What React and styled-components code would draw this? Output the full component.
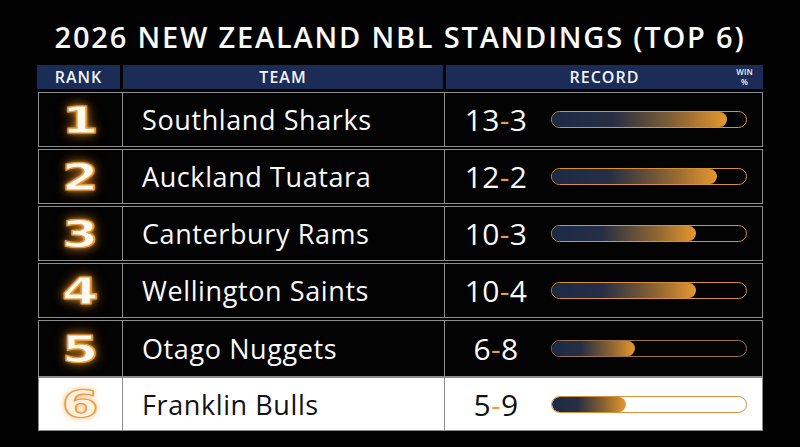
import React from 'react';
import styled, { createGlobalStyle } from 'styled-components';

const GlobalStyle = createGlobalStyle`
  html, body {
    margin: 0;
    padding: 0;
    background: #020202;
  }
  body {
    font-family: "Open Sans", "Liberation Sans", sans-serif;
  }
`;

const Page = styled.main`
  width: 800px;
  height: 447px;
  background: #020202;
  overflow: hidden;
`;

const Title = styled.h1`
  margin: 0;
  padding-top: 19px;
  height: 47px;
  box-sizing: border-box;
  text-align: center;
  color: #fafafa;
  font-size: 29px;
  font-weight: 600;
  letter-spacing: 1.8px;
  line-height: 36px;
`;

const Table = styled.section`
  width: 726px;
  margin-left: 37px;
`;

const HeaderRow = styled.div`
  display: grid;
  grid-template-columns: 83px 320px 1fr;
  column-gap: 3px;
  height: 24px;
  margin-top: 18px;
`;

const HeaderCell = styled.div`
  position: relative;
  background: #1b2d57;
  color: #f2f4f8;
  font-size: 16px;
  font-weight: 600;
  letter-spacing: 1px;
  display: flex;
  align-items: center;
  justify-content: center;
`;

const WinLabel = styled.span`
  position: absolute;
  right: 10px;
  top: 2px;
  font-size: 8px;
  line-height: 10px;
  font-weight: 600;
  letter-spacing: 0.2px;
  text-align: center;
`;

const Rows = styled.div`
  display: flex;
  flex-direction: column;
  gap: 2px;
  margin-top: 3px;
  margin-left: 1px;
`;

const Group = styled.div`
  display: flex;
  flex-direction: column;
`;

const Row = styled.div`
  display: grid;
  grid-template-columns: 84px 322px 1fr;
  height: ${p => p.$h}px;
  box-sizing: border-box;
  border: 1.5px solid #8d8d8d;
  background: ${p => (p.$light ? '#ffffff' : '#030303')};
  color: ${p => (p.$light ? '#111111' : '#fafafa')};
`;

const RankCell = styled.div`
  border-right: 1.5px solid #8d8d8d;
  display: flex;
  align-items: center;
  justify-content: center;
`;

const Digit = styled.span`
  display: inline-block;
  font-family: "DejaVu Sans", "Liberation Sans", sans-serif;
  font-weight: 700;
  font-size: 38px;
  line-height: 1;
  transform: scaleX(1.38);
  color: ${p => (p.$light ? '#fdf0de' : '#fffaf0')};
  -webkit-text-stroke: 1.2px #e69a3c;
  text-shadow: ${p =>
    p.$light
      ? '0 0 4px rgba(238,160,70,0.7), 0 0 8px rgba(238,160,70,0.4)'
      : '0 0 3px #f2a23a, 0 0 8px rgba(240,150,40,0.8), 0 0 14px rgba(240,140,30,0.45)'};
`;

const TeamCell = styled.div`
  border-right: 1.5px solid #8d8d8d;
  display: flex;
  align-items: center;
  padding-left: 19px;
  font-size: 27px;
  font-weight: 400;
  letter-spacing: 0.6px;
`;

const RecordCell = styled.div`
  display: flex;
  align-items: center;
`;

const Score = styled.div`
  width: 102px;
  text-align: center;
  font-size: 30px;
  font-weight: 400;
  letter-spacing: 0.3px;
`;

const Dash = styled.span`
  color: #e7a041;
`;

const Track = styled.div`
  margin-left: 4px;
  width: 196px;
  height: 17px;
  box-sizing: border-box;
  border: 1.5px solid ${p => p.$muted ? '#9a7148' : '#d8903a'};
  border-radius: 9px;
  background: ${p => (p.$light ? '#ffffff' : '#030303')};
  overflow: hidden;
`;

const Fill = styled.div`
  height: 100%;
  border-radius: 9px;
  box-sizing: border-box;
  border-right: 1.5px solid #e39a40;
  background: linear-gradient(90deg, #1c2a47 0%, #262e44 35%, #8a6432 72%, #e3962e 100%);
`;

const teams = [
  { rank: 1, name: 'Southland Sharks', w: 13, l: 3, pct: 90, h: 55 },
  { rank: 2, name: 'Auckland Tuatara', w: 12, l: 2, pct: 85, h: 55 },
  { rank: 3, name: 'Canterbury Rams', w: 10, l: 3, pct: 74, h: 55 },
  { rank: 4, name: 'Wellington Saints', w: 10, l: 4, pct: 74, h: 55 },
  { rank: 5, name: 'Otago Nuggets', w: 6, l: 8, pct: 43, h: 57, muted: true },
  { rank: 6, name: 'Franklin Bulls', w: 5, l: 9, pct: 38, h: 54, light: true },
];

function TeamRow({ t }) {
  return (
    <Row $h={t.h} $light={t.light}>
      <RankCell>
        <Digit $light={t.light}>{t.rank}</Digit>
      </RankCell>
      <TeamCell>{t.name}</TeamCell>
      <RecordCell>
        <Score>
          {t.w}<Dash>-</Dash>{t.l}
        </Score>
        <Track $light={t.light} $muted={t.muted}>
          <Fill style={{ width: `${t.pct}%` }} />
        </Track>
      </RecordCell>
    </Row>
  );
}

export default function App() {
  return (
    <Page>
      <GlobalStyle />
      <Title>2026 NEW ZEALAND NBL STANDINGS (TOP 6)</Title>
      <Table>
        <HeaderRow>
          <HeaderCell>RANK</HeaderCell>
          <HeaderCell>TEAM</HeaderCell>
          <HeaderCell>
            RECORD
            <WinLabel>WIN<br />%</WinLabel>
          </HeaderCell>
        </HeaderRow>
        <Rows>
          {teams.slice(0, 4).map(t => <TeamRow key={t.rank} t={t} />)}
          <Group>
            {teams.slice(4).map(t => <TeamRow key={t.rank} t={t} />)}
          </Group>
        </Rows>
      </Table>
    </Page>
  );
}
